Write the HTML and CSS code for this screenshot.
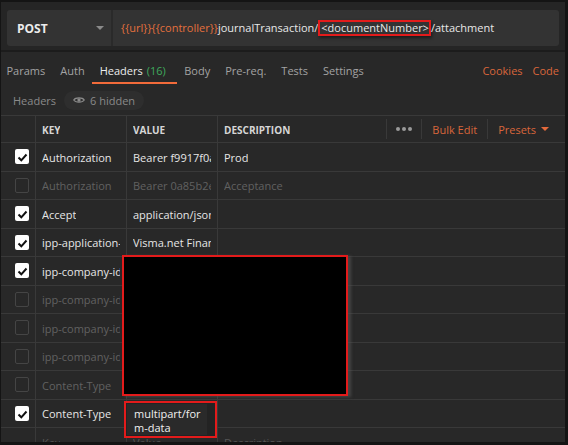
FILE: index.html
```html
<!DOCTYPE html>
<html>
	<head>
		<meta charset="UTF-8">
		<title>Headers</title>
		<link rel="stylesheet" href="styles.css">
	</head>
	<body>
		<div class="app">
			<div class="topbar">
				<div class="url-box">
					<div class="method">POST <span class="caret"></span></div>
					<div class="url"><span class="var">{{url}}{{controller}}</span>journalTransaction/<span class="mark">&lt;documentNumber&gt;</span>/attachment</div>
				</div>
			</div>
			<div class="tabs">
				<a class="tab">Params</a>
				<a class="tab">Auth</a>
				<a class="tab active">Headers <span class="count">(16)</span></a>
				<a class="tab">Body</a>
				<a class="tab">Pre-req.</a>
				<a class="tab">Tests</a>
				<a class="tab">Settings</a>
				<div class="tab-links">
					<a>Cookies</a>
					<a>Code</a>
				</div>
			</div>
			<div class="sub-head">
				<span class="sub-title">Headers</span>
				<span class="pill">
					<svg width="12" height="8" viewBox="0 0 16 10"><path d="M1 5C3.5 1.2 12.5 1.2 15 5C12.5 8.8 3.5 8.8 1 5Z" fill="none" stroke="#8c8c8c" stroke-width="1.6"/><circle cx="8" cy="5" r="2.2" fill="#8c8c8c"/></svg>
					6 hidden
				</span>
			</div>
			<div class="table">
				<div class="row head">
					<div class="cell"></div>
					<div class="cell"><span>KEY</span></div>
					<div class="cell"><span>VALUE</span></div>
					<div class="cell desc-head">
						<span>DESCRIPTION</span>
						<div class="tools">
							<span class="dots"><i></i><i></i><i></i></span>
							<a>Bulk Edit</a>
							<a>Presets <span class="caret orange"></span></a>
						</div>
					</div>
				</div>
				<div class="row">
					<div class="cell"><span class="check on"><svg width="15" height="15" viewBox="0 0 15 15"><polyline points="3.5,7.5 6.3,10.3 11.5,4.5" fill="none" stroke="#111" stroke-width="2"/></svg></span></div>
					<div class="cell"><span>Authorization</span></div>
					<div class="cell"><span>Bearer f9917f0a3c2e</span></div>
					<div class="cell"><span>Prod</span></div>
				</div>
				<div class="row off">
					<div class="cell"><span class="check"></span></div>
					<div class="cell"><span>Authorization</span></div>
					<div class="cell"><span>Bearer 0a85b2e7d14c</span></div>
					<div class="cell"><span>Acceptance</span></div>
				</div>
				<div class="row">
					<div class="cell"><span class="check on"><svg width="15" height="15" viewBox="0 0 15 15"><polyline points="3.5,7.5 6.3,10.3 11.5,4.5" fill="none" stroke="#111" stroke-width="2"/></svg></span></div>
					<div class="cell"><span>Accept</span></div>
					<div class="cell"><span>application/json</span></div>
					<div class="cell"></div>
				</div>
				<div class="row">
					<div class="cell"><span class="check on"><svg width="15" height="15" viewBox="0 0 15 15"><polyline points="3.5,7.5 6.3,10.3 11.5,4.5" fill="none" stroke="#111" stroke-width="2"/></svg></span></div>
					<div class="cell"><span>ipp-application-type</span></div>
					<div class="cell"><span>Visma.net Financials</span></div>
					<div class="cell"></div>
				</div>
				<div class="row">
					<div class="cell"><span class="check on"><svg width="15" height="15" viewBox="0 0 15 15"><polyline points="3.5,7.5 6.3,10.3 11.5,4.5" fill="none" stroke="#111" stroke-width="2"/></svg></span></div>
					<div class="cell"><span>ipp-company-id</span></div>
					<div class="cell"></div>
					<div class="cell"></div>
				</div>
				<div class="row off">
					<div class="cell"><span class="check"></span></div>
					<div class="cell"><span>ipp-company-id</span></div>
					<div class="cell"></div>
					<div class="cell"></div>
				</div>
				<div class="row off">
					<div class="cell"><span class="check"></span></div>
					<div class="cell"><span>ipp-company-id</span></div>
					<div class="cell"></div>
					<div class="cell"></div>
				</div>
				<div class="row off">
					<div class="cell"><span class="check"></span></div>
					<div class="cell"><span>ipp-company-id</span></div>
					<div class="cell"></div>
					<div class="cell"></div>
				</div>
				<div class="row off">
					<div class="cell"><span class="check"></span></div>
					<div class="cell"><span>Content-Type</span></div>
					<div class="cell"></div>
					<div class="cell"></div>
				</div>
				<div class="row">
					<div class="cell"><span class="check on"><svg width="15" height="15" viewBox="0 0 15 15"><polyline points="3.5,7.5 6.3,10.3 11.5,4.5" fill="none" stroke="#111" stroke-width="2"/></svg></span></div>
					<div class="cell"><span>Content-Type</span></div>
					<div class="cell"></div>
					<div class="cell"></div>
				</div>
				<div class="row placeholder">
					<div class="cell"></div>
					<div class="cell"><span>Key</span></div>
					<div class="cell"><span>Value</span></div>
					<div class="cell"><span>Description</span></div>
				</div>
				<!--遮盖的部分-->
				<div class="redact"></div>
				<div class="editor"><div class="editor-text">multipart/form-data</div></div>
			</div>
		</div>
	</body>
</html>
```

FILE: styles.css
```css
* {
	box-sizing: border-box;
}
body {
	margin: 0;
	background: #141414;
	font-family: "Open Sans", "Liberation Sans", sans-serif;
	font-size: 11px;
	color: #e6e6e6;
}
a {
	text-decoration: none;
	color: inherit;
}
.app {
	margin: 2px 3px 0 1px;
	height: 440px;
	background: #282828;
	overflow: hidden;
}
.topbar {
	height: 50px;
	background: #252525;
	padding: 8px 6px 6px 6px;
	border-bottom: 2px solid #1c1c1c;
}
.url-box {
	height: 36px;
	background: #333;
	border-radius: 3px;
	display: flex;
	align-items: center;
}
.method {
	width: 106px;
	height: 100%;
	display: flex;
	align-items: center;
	padding-left: 10px;
	font-size: 12px;
	font-weight: bold;
	color: #ececec;
	border-right: 2px solid #2a2a2a;
}
.caret {
	display: inline-block;
	width: 0;
	height: 0;
	border-left: 4px solid transparent;
	border-right: 4px solid transparent;
	border-top: 4px solid #8a8a8a;
	margin-left: 48px;
}
.caret.orange {
	border-top-color: #e4693b;
	margin-left: 5px;
	vertical-align: middle;
}
.url {
	padding-left: 8px;
	white-space: nowrap;
	color: #e8e8e8;
}
.url .var {
	color: #e4703d;
}
.url .mark {
	display: inline-block;
	line-height: 12px;
	border: 2px solid #e31b1b;
	padding: 0 0 0 1px;
	box-shadow: 1px 2px 3px rgba(0, 0, 0, 0.45);
}
.tabs {
	height: 33px;
	display: flex;
	margin-left: -2px;
	padding-right: 6px;
}
.tab {
	display: flex;
	align-items: center;
	padding: 6px 7.5px 0 7.5px;
	color: #a3a3a3;
	border-bottom: 2px solid transparent;
	margin-bottom: 1px;
}
.tab.active {
	color: #ececec;
	border-bottom-color: #f26b3a;
	padding-right: 11px;
}
.tab .count {
	color: #3fa85d;
	margin-left: 4px;
}
.tab-links {
	margin-left: auto;
	display: flex;
	align-items: center;
	gap: 10px;
	padding-top: 4px;
	color: #d9663b;
}
.sub-head {
	height: 30px;
	display: flex;
	align-items: center;
	padding-left: 12px;
	color: #8a8a8a;
}
.pill {
	margin-left: 8px;
	height: 19px;
	padding: 0 9px 0 9px;
	border-radius: 10px;
	background: #2e2e2e;
	display: flex;
	align-items: center;
	gap: 5px;
}
.table {
	position: relative;
	border-top: 1px solid #393939;
}
.row {
	display: grid;
	grid-template-columns: 34px 91px 91px 1fr;
	height: 28.5px;
	border-bottom: 1px solid #393939;
}
.row.head {
	height: 27px;
	font-size: 10px;
	font-weight: bold;
	color: #d6d6d6;
}
.cell {
	display: flex;
	align-items: center;
	min-width: 0;
	padding: 0 6px;
	border-left: 1px solid #393939;
	overflow: hidden;
}
.cell:first-child {
	border-left: none;
	padding-left: 14px;
}
.cell span {
	display: block;
	min-width: 0;
	flex-shrink: 1;
	overflow: hidden;
	white-space: nowrap;
	padding-top: 1px;
}
.row.off {
	color: #616161;
}
.row.placeholder {
	color: #555;
}
.check {
	width: 15px;
	height: 15px;
	flex-shrink: 0;
	border-radius: 2px;
	border: 1px solid #454545;
}
.check.on {
	background: #fff;
	border: none;
}
.check svg {
	display: block;
}
.desc-head {
	justify-content: space-between;
	padding-right: 0;
}
.tools {
	display: flex;
	align-items: center;
	height: 100%;
	font-size: 11px;
	font-weight: normal;
	color: #d9663b;
}
.tools .dots {
	display: flex;
	gap: 2px;
	padding: 0 9px;
	height: 20px;
	align-items: center;
	border-left: 1px solid #393939;
	border-right: 1px solid #393939;
}
.tools .dots i {
	width: 4px;
	height: 4px;
	border-radius: 2px;
	background: #9a9a9a;
}
.tools a {
	padding: 0 10px;
	height: 20px;
	display: flex;
	align-items: center;
}
.tools a + a {
	border-left: 1px solid #393939;
	padding-right: 16px;
}
.redact {
	position: absolute;
	left: 121px;
	top: 139px;
	width: 226px;
	height: 141px;
	background: #000;
	border: 2px solid #e31b1b;
	box-shadow: 3px 1px 3px rgba(90, 90, 90, 0.6);
}
.editor {
	position: absolute;
	left: 123px;
	top: 285px;
	width: 93px;
	height: 37px;
	border: 2px solid #e31b1b;
	background: #232323;
	padding: 1px;
}
.editor-text {
	height: 100%;
	background: #2a2a2a;
	padding: 3px 0 0 7px;
	width: 80px;
	line-height: 14px;
	word-break: break-all;
	color: #f0f0f0;
}
```
